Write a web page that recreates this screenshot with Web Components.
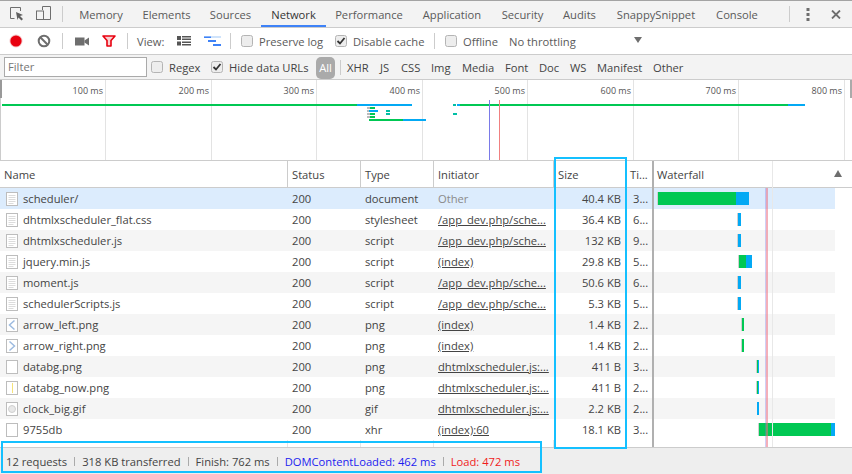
<!DOCTYPE html>
<html>
<head>
<meta charset="utf-8">
<title>Network</title>
<style>
  html, body { margin: 0; padding: 0; background: #fff; }
  body { width: 852px; height: 474px; overflow: hidden; font: 11.2px "Open Sans", "Noto Sans", sans-serif; color: #444; }
  devtools-panel { display: block; }
</style>
</head>
<body>
<devtools-panel></devtools-panel>
<script>
/**
 * Small helper: makes a shadow root from a css and html string.
 */
function shadow (host, css, html) {
  host.attachShadow({ mode: 'open' }).innerHTML = `<style>${css}</style>${html}`
}

/**
 * Top bar with the inspect icons and the panel tabs.
 */
customElements.define('tab-strip', class extends HTMLElement {
  constructor () {
    super()
    // name, width of the tab
    const tabs = [['Memory', 64], ['Elements', 67], ['Sources', 61], ['Network', 65], ['Performance', 86], ['Application', 80], ['Security', 61], ['Audits', 53], ['SnappySnippet', 100], ['Console', 62]]
    shadow(this, `
      :host { display: flex; height: 28px; box-sizing: border-box; background: #f3f3f3; border-top: 1px solid #a3a3a3; border-bottom: 1px solid #ccc; align-items: stretch; color: #5a5a5a; }
      .icons { display: flex; align-items: center; width: 62px; flex: none; }
      svg { display: block; flex: none; }
      .sep { width: 1px; height: 16px; background: #ccc; align-self: center; flex: none; }
      .tabs { display: flex; padding-left: 6px; flex: 1; }
      .tab { text-align: center; line-height: 27px; white-space: nowrap; }
      .tab.on { color: #333; box-shadow: inset 0 -2px 0 #3e82f7; }
      .end { display: flex; align-items: center; width: 62px; flex: none; }
    `, `
      <div class="icons">
        <svg style="margin-left:10px" width="14" height="14" viewBox="0 0 14 14"><path d="M4.500 11.500H.5V.5H10.500V4" fill="none" stroke="#6e6e6e"/><path d="M6 5l7 3-3 1 3 3-1.500 1.500-3-3-1 2.500z" fill="#5f5f5f"/></svg>
        <svg style="margin-left:12px;margin-top:-1px" width="15" height="15" viewBox="0 0 15 15"><path d="M6.500 4V.5H14.500V13.500H8" fill="none" stroke="#6e6e6e"/><rect x="0.500" y="5" width="7" height="8.500" fill="none" stroke="#6e6e6e"/></svg>
      </div>
      <div class="sep"></div>
      <div class="tabs">${tabs.map(t => `<div class="tab${t[0] === 'Network' ? ' on' : ''}" style="width:${t[1]}px">${t[0]}</div>`).join('')}</div>
      <div class="sep"></div>
      <div class="end">
        <svg style="margin-left:16px" width="4" height="13" viewBox="0 0 4 13" fill="#6e6e6e"><rect x="0.500" width="3" height="3"/><rect x="0.500" y="5" width="3" height="3"/><rect x="0.500" y="10" width="3" height="3"/></svg>
        <svg style="margin-left:21px" width="10" height="9" viewBox="0 0 10 9"><path d="M1 .5l8 8M9 .5l-8 8" stroke="#6e6e6e" stroke-width="1.800"/></svg>
      </div>
    `)
  }
})

/**
 * A labelled checkbox as drawn in the toolbars.
 */
customElements.define('check-box', class extends HTMLElement {
  constructor () {
    super()
    const tick = this.hasAttribute('checked') ? '<path d="M2.500 6l2.500 2.500 4.500-5.500" fill="none" stroke="#333" stroke-width="1.800"/>' : ''
    shadow(this, `
      :host { display: inline-flex; align-items: center; gap: 6px; white-space: nowrap; flex: none; }
      svg { display: block; }
    `, `<svg width="12" height="12" viewBox="0 0 12 12"><rect x="0.500" y="0.500" width="11" height="11" rx="2" fill="#ededed" stroke="#b4b4b4"/>${tick}</svg><slot></slot>`)
  }
})

/**
 * Record / clear / capture row.
 */
customElements.define('net-toolbar', class extends HTMLElement {
  constructor () {
    super()
    shadow(this, `
      :host { display: flex; align-items: center; height: 27px; box-sizing: border-box; background: #fff; border-bottom: 1px solid #ccc; color: #5a5a5a; }
      svg { display: block; flex: none; }
      span { flex: none; }
      .sep { width: 1px; height: 16px; background: #ccc; flex: none; }
      .arrow { width: 0; height: 0; border: 4px solid transparent; border-top: 6px solid #6e6e6e; border-bottom: 0; margin-top: -3px; flex: none; }
    `, `
      <svg style="margin-left:9px" width="14" height="14" viewBox="0 0 14 14"><circle cx="7" cy="7" r="6.500" fill="#f6c4c6"/><circle cx="7" cy="7" r="5.600" fill="#e8000f"/></svg>
      <svg style="margin-left:14px" width="14" height="14" viewBox="0 0 14 14"><circle cx="7" cy="7" r="5.300" fill="none" stroke="#6e6e6e" stroke-width="2"/><path d="M3.300 3.300l7.400 7.400" stroke="#6e6e6e" stroke-width="2"/></svg>
      <div class="sep" style="margin-left:11px"></div>
      <svg style="margin-left:12px" width="14" height="9" viewBox="0 0 14 9" fill="#6e6e6e"><rect width="9.500" height="8" y="0.500"/><path d="M9.500 3.500L14 .5v8L9.500 5.500z"/></svg>
      <svg style="margin-left:13px" width="14" height="12" viewBox="0 0 14 12"><path d="M1 1h12L9 5.500V11H5V5.500z" fill="#f8d0d0" stroke="#e8000f" stroke-width="1.600" stroke-linejoin="round"/></svg>
      <div class="sep" style="margin-left:11px"></div>
      <span style="margin-left:9px;width:40px">View:</span>
      <svg width="14" height="10" viewBox="0 0 14 10" fill="#555"><rect width="4" height="4"/><rect y="5.500" width="4" height="4"/><rect x="5" width="9" height="1.500"/><rect x="5" y="2.500" width="9" height="1.500"/><rect x="5" y="5.500" width="9" height="1.500"/><rect x="5" y="8" width="9" height="1.500"/></svg>
      <svg style="margin-left:13px" width="17" height="11" viewBox="0 0 17 11"><rect width="17" height="2" fill="#cfe3fb"/><rect width="7" height="1.500" y="0.500" fill="#3e82f7"/><rect x="4" y="4" width="8" height="2" fill="#3e82f7"/><rect x="9" y="8" width="8" height="2" fill="#3e82f7"/></svg>
      <div class="sep" style="margin-left:9px"></div>
      <check-box style="margin-left:10px;width:94px">Preserve log</check-box>
      <check-box style="width:99px" checked>Disable cache</check-box>
      <div class="sep"></div>
      <check-box style="margin-left:10px;width:64px">Offline</check-box>
      <span style="width:125px">No throttling</span>
      <div class="arrow"></div>
    `)
  }
})

/**
 * Filter input and the resource type buttons.
 */
customElements.define('filter-bar', class extends HTMLElement {
  constructor () {
    super()
    // name, width of the button
    const types = [['XHR', 33], ['JS', 21], ['CSS', 30], ['Img', 31], ['Media', 43], ['Font', 34], ['Doc', 31], ['WS', 27], ['Manifest', 56], ['Other', 40]]
    shadow(this, `
      :host { display: flex; align-items: center; height: 25px; box-sizing: border-box; background: #f3f3f3; border-bottom: 1px solid #ccc; color: #444; }
      .input { margin-left: 4px; width: 143px; height: 20px; flex: none; box-sizing: border-box; background: #fff; border: 1px solid #aaa; padding-left: 3px; line-height: 18px; color: #757575; }
      .all { background: #aaa; color: #fff; border-radius: 5px; height: 22px; width: 19px; flex: none; text-align: center; line-height: 22px; margin-top: 1px; }
      .sep { width: 1px; height: 15px; background: #ccc; margin: 0 6px 0 5px; flex: none; }
      .types { display: flex; }
    `, `
      <div class="input">Filter</div>
      <check-box style="margin-left:4px;width:60px">Regex</check-box>
      <check-box style="width:105px" checked>Hide data URLs</check-box>
      <div class="all">All</div>
      <div class="sep"></div>
      <div class="types">${types.map(t => `<span style="width:${t[1]}px">${t[0]}</span>`).join('')}</div>
    `)
  }
})

/**
 * The overview strip with the time scale.
 */
customElements.define('net-overview', class extends HTMLElement {
  constructor () {
    super()
    const ticks = [[100, 105], [200, 211], [300, 316], [400, 422], [500, 527], [600, 633], [700, 738], [800, 844]]
    const bars = [
      // x, y, width, height, colour
      [2, 104, 355, 2, '#00c853'], [357, 104, 55, 2, '#03a9f4'],
      [460, 104, 328, 2, '#00c853'], [788, 104, 17, 2, '#03a9f4'],
      [453, 104, 3, 2, '#00bfa5'], [457, 104, 3, 2, '#03a9f4'],
      [367, 107, 3, 2, '#bbb'], [370, 107, 5, 2, '#00c853'],
      [367, 110, 2, 2, '#bbb'], [369, 110, 9, 2, '#03a9f4'], [386, 110, 4, 2, '#00bfa5'],
      [367, 113, 3, 2, '#bbb'], [370, 113, 5, 2, '#00c853'], [386, 113, 4, 2, '#00bfa5'],
      [367, 116, 3, 2, '#bbb'], [370, 116, 5, 2, '#00c853'],
      [369, 119, 34, 2, '#00c853'], [403, 119, 23, 2, '#03a9f4'], [453, 113, 4, 2, '#00bfa5']
    ]
    shadow(this, `
      :host { display: block; position: relative; height: 81px; background: #fff; border-bottom: 1px solid #ccc; box-sizing: border-box; }
      .tick { position: absolute; top: 0; bottom: 0; width: 1px; background: #e3e3e3; }
      .tick span { position: absolute; right: 3px; top: 4px; font-size: 9px; line-height: 13px; color: #555; white-space: nowrap; }
      .bar { position: absolute; }
    `, `
      <div class="bar" style="left:0;top:0;bottom:0;width:1px;background:#ccc"></div>
      <div class="bar" style="left:0;top:0;width:2px;height:18px;background:#999"></div>
      <div class="bar" style="left:850px;top:0;width:2px;height:18px;background:#aaa"></div>
      ${ticks.map(t => `<div class="tick" style="left:${t[1]}px"><span>${t[0]} ms</span></div>`).join('')}
      ${bars.map(b => `<div class="bar" style="left:${b[0]}px;top:${b[1] - 80}px;width:${b[2]}px;height:${b[3]}px;background:${b[4]}"></div>`).join('')}
      <div class="bar" style="left:489px;top:20px;bottom:0;width:1px;background:#7a7ae8"></div>
      <div class="bar" style="left:499px;top:20px;bottom:0;width:1px;background:#f08080"></div>
    `)
  }
})

const GREEN = '#00c853'
const BLUE = '#03a9f4'
const STUB = '#d0d0d0'

/**
 * Table rows: name, icon, type, initiator, size, time and waterfall pieces (x, width, colour).
 */
const ROWS = [
  ['scheduler/', 'doc', 'document', 'Other', '40.4 KB', '3...', [[657, 1, STUB], [658, 78, GREEN], [736, 13, BLUE]]],
  ['dhtmlxscheduler_flat.css', 'doc', 'stylesheet', '/app_dev.php/sche...', '36.4 KB', '6...', [[737, 1, STUB], [738, 3, BLUE]]],
  ['dhtmlxscheduler.js', 'doc', 'script', '/app_dev.php/sche...', '132 KB', '9...', [[737, 1, STUB], [738, 3, BLUE]]],
  ['jquery.min.js', 'doc', 'script', '(index)', '29.8 KB', '5...', [[738, 1, STUB], [739, 7, GREEN], [746, 6, BLUE]]],
  ['moment.js', 'doc', 'script', '/app_dev.php/sche...', '50.6 KB', '6...', [[737, 1, STUB], [738, 3, BLUE]]],
  ['schedulerScripts.js', 'doc', 'script', '/app_dev.php/sche...', '5.3 KB', '5...', [[737, 1, STUB], [738, 3, BLUE]]],
  ['arrow_left.png', 'left', 'png', '(index)', '1.4 KB', '2...', [[741, 1, STUB], [742, 2, GREEN]]],
  ['arrow_right.png', 'right', 'png', '(index)', '1.4 KB', '2...', [[741, 1, STUB], [742, 2, GREEN]]],
  ['databg.png', 'blank', 'png', 'dhtmlxscheduler.js:...', '411 B', '3...', [[756, 1, STUB], [757, 1, GREEN], [758, 1, BLUE]]],
  ['databg_now.png', 'now', 'png', 'dhtmlxscheduler.js:...', '411 B', '2...', [[756, 1, STUB], [757, 1, GREEN], [758, 1, BLUE]]],
  ['clock_big.gif', 'clock', 'gif', 'dhtmlxscheduler.js:...', '2.2 KB', '2...', [[757, 2, BLUE]]],
  ['9755db', 'blank', 'xhr', '(index):60', '18.1 KB', '3...', [[758, 1, STUB], [759, 72, GREEN], [831, 4, BLUE]]]
]

/**
 * Small file icon for the name column.
 */
function fileIcon (kind) {
  const inner = {
    doc: '<path d="M2.500 3.500h7M2.500 5.500h7M2.500 7.500h7M2.500 9.500h7M2.500 11.500h5" stroke="#dcdcdc"/>',
    left: '<path d="M8.500 2.500L3.500 7l5 4.500" fill="none" stroke="#9dbbe0" stroke-width="1.500"/>',
    right: '<path d="M3.500 2.500l5 4.500-5 4.500" fill="none" stroke="#9dbbe0" stroke-width="1.500"/>',
    blank: '',
    now: '<path d="M6.500 2v10" stroke="#f5e27a"/>',
    clock: '<circle cx="6" cy="7" r="3.500" fill="#e8e8e8" stroke="#cfcfcf"/>'
  }[kind]
  return `<svg width="12" height="14" viewBox="0 0 12 14"><rect x="0.500" y="0.500" width="11" height="13" fill="#fff" stroke="#bdbdbd"/>${inner}</svg>`
}

/**
 * The requests table, header and rows in a shared grid.
 */
customElements.define('net-table', class extends HTMLElement {
  constructor () {
    super()
    const cols = '288px 73px 73px 120px 73px 27px 1fr'
    const head = ['Name', 'Status', 'Type', 'Initiator', 'Size', 'Ti...']
    const rows = ROWS.map((r, i) => `
      <div class="row${i === 0 ? ' sel' : (i % 2 === 0 ? ' alt' : '')}">
        <div class="cell name">${fileIcon(r[1])}<span>${r[0]}</span></div>
        <div class="cell">200</div>
        <div class="cell">${r[2]}</div>
        <div class="cell${i === 0 ? ' other' : ' link'}"><span>${r[3]}</span></div>
        <div class="cell right">${r[4]}</div>
        <div class="cell time">${r[5]}</div>
        <div class="fall">${r[6].map(b => `<i style="left:${b[0] - 654}px;width:${b[1]}px;background:${b[2]}"></i>`).join('')}</div>
      </div>`).join('')
    shadow(this, `
      :host { display: block; position: relative; height: 287px; background: #fff; border-bottom: 1px solid #ccc; box-sizing: border-box; overflow: hidden; color: #444; }
      .head, .row { display: grid; grid-template-columns: ${cols}; }
      .head { height: 27px; box-sizing: border-box; border-bottom: 1px solid #ccc; }
      .head .cell { border-right: 1px solid #ccc; line-height: 27px; padding-left: 4px; }
      .head .cell.ti { padding-left: 3px; border: 0; }
      .head .cell.wf { border: 0; padding-left: 3px; position: relative; }
      .tri { position: absolute; left: 180px; top: 9px; border: 4px solid transparent; border-bottom: 7px solid #6e6e6e; border-top: 0; }
      .row { height: 21px; width: 835px; }
      .row.alt { background: #f5f5f5; }
      .row.sel { background: #dcecfd; }
      .cell { padding-left: 4px; line-height: 21px; white-space: nowrap; overflow: hidden; min-width: 0; box-sizing: border-box; }
      .name { display: flex; align-items: center; gap: 5px; padding-left: 6px; }
      svg { display: block; flex: none; }
      .right { text-align: right; padding-right: 6px; }
      .other { color: #8a8a8a; }
      .link span { text-decoration: underline; }
      .time { padding-left: 6px; }
      .fall { position: relative; }
      .fall i { position: absolute; top: 4px; height: 13px; }
      .rule { position: absolute; top: 279px; bottom: 0; width: 1px; background: #e6e6e6; }
      .line { position: absolute; top: 27px; bottom: 0; }
      .bold { position: absolute; top: 0; bottom: 0; left: 652px; width: 2px; background: #b0b0b0; }
    `, `
      <div class="head">
        ${head.map((h, i) => `<div class="cell${i === 5 ? ' ti' : ''}">${h}</div>`).join('')}
        <div class="cell wf">Waterfall<div class="tri"></div></div>
      </div>
      ${rows}
      <div class="rule" style="left:287px"></div>
      <div class="rule" style="left:360px"></div>
      <div class="rule" style="left:433px"></div>
      <div class="rule" style="left:553px"></div>
      <div class="bold"></div>
      <div class="line" style="left:772px;top:0;width:1px;background:#e8e8e8"></div>
      <div class="line" style="left:765px;width:1px;background:rgba(120,120,230,.35)"></div>
      <div class="line" style="left:766px;width:2px;background:rgba(235,110,130,.55)"></div>
    `)
  }
})

/**
 * Summary bar at the bottom.
 */
customElements.define('status-bar', class extends HTMLElement {
  constructor () {
    super()
    shadow(this, `
      :host { display: flex; align-items: center; height: 26px; padding-left: 6px; box-sizing: border-box; background: #eee; color: #444; white-space: nowrap; }
      .s { width: 1px; height: 9px; background: #aaa; margin: 0 7px; flex: none; }
      .blue { color: #1c1cf0; }
      .red { color: #f01c1c; }
    `, `
      <span>12 requests</span><i class="s"></i><span>318 KB transferred</span><i class="s"></i><span>Finish: 762 ms</span><i class="s"></i><span class="blue">DOMContentLoaded: 462 ms</span><i class="s"></i><span class="red">Load: 472 ms</span>
    `)
  }
})

/**
 * Whole panel, with the two blue marker boxes lying over it.
 */
customElements.define('devtools-panel', class extends HTMLElement {
  constructor () {
    super()
    shadow(this, `
      :host { display: block; position: relative; width: 852px; height: 474px; overflow: hidden; }
      .mark { position: absolute; border: 2px solid #14c0ff; box-sizing: border-box; pointer-events: none; }
    `, `
      <tab-strip></tab-strip>
      <net-toolbar></net-toolbar>
      <filter-bar></filter-bar>
      <net-overview></net-overview>
      <net-table></net-table>
      <status-bar></status-bar>
      <div class="mark" style="left:554px;top:157px;width:73px;height:292px"></div>
      <div class="mark" style="left:1px;top:441px;width:541px;height:32px"></div>
    `)
  }
})
</script>
</body>
</html>
